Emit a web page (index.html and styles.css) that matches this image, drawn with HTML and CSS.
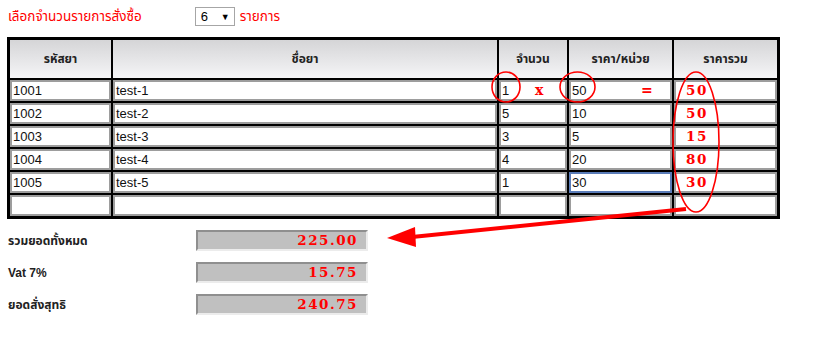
FILE: index.html
```html
<!DOCTYPE html>
<html lang="th">
<head>
<meta charset="utf-8">
<title>สั่งซื้อยา</title>
<link rel="stylesheet" href="styles.css">
</head>
<body>
<div class="page">
  <div class="topbar">
    <span class="red-label">เลือกจำนวนรายการสั่งซื้อ</span>
    <div class="select"><span>6</span><span class="caret">▼</span></div>
    <span class="red-label">รายการ</span>
  </div>

  <table class="grid">
    <colgroup>
      <col class="c1"><col class="c2"><col class="c3"><col class="c4"><col class="c5">
    </colgroup>
    <thead>
      <tr><th>รหัสยา</th><th>ชื่อยา</th><th>จำนวน</th><th>ราคา/หน่วย</th><th>ราคารวม</th></tr>
    </thead>
    <tbody>
      <tr><td><div class="in">1001</div></td><td><div class="in">test-1</div></td><td><div class="in">1</div></td><td><div class="in">50</div></td><td><div class="in sum">50</div></td></tr>
      <tr><td><div class="in">1002</div></td><td><div class="in">test-2</div></td><td><div class="in">5</div></td><td><div class="in">10</div></td><td><div class="in sum">50</div></td></tr>
      <tr><td><div class="in">1003</div></td><td><div class="in">test-3</div></td><td><div class="in">3</div></td><td><div class="in">5</div></td><td><div class="in sum">15</div></td></tr>
      <tr><td><div class="in">1004</div></td><td><div class="in">test-4</div></td><td><div class="in">4</div></td><td><div class="in">20</div></td><td><div class="in sum">80</div></td></tr>
      <tr><td><div class="in">1005</div></td><td><div class="in">test-5</div></td><td><div class="in">1</div></td><td><div class="in focus">30</div></td><td><div class="in sum">30</div></td></tr>
      <tr><td><div class="in"></div></td><td><div class="in"></div></td><td><div class="in"></div></td><td><div class="in"></div></td><td><div class="in sum"></div></td></tr>
    </tbody>
  </table>

  <div class="totals">
    <span class="tlabel">รวมยอดทั้งหมด</span><div class="tbox">225.00</div>
    <span class="tlabel">Vat 7%</span><div class="tbox">15.75</div>
    <span class="tlabel">ยอดสั่งสุทธิ</span><div class="tbox">240.75</div>
  </div>

  <span class="mark mark-x">x</span>
  <span class="mark mark-eq">=</span>

  <svg class="annot" width="821" height="339" viewBox="0 0 821 339">
    <ellipse cx="506" cy="87" rx="14" ry="15" fill="none" stroke="#f00" stroke-width="1.6"/>
    <ellipse cx="577.5" cy="87" rx="17.5" ry="15" fill="none" stroke="#f00" stroke-width="1.6"/>
    <ellipse cx="696" cy="142" rx="23" ry="70" fill="none" stroke="#f00" stroke-width="1.6"/>
    <line x1="686" y1="209" x2="412" y2="237" stroke="#f00" stroke-width="4"/>
    <polygon points="387,238 415,227 416,247" fill="#f00"/>
  </svg>
</div>
</body>
</html>
```

FILE: styles.css
```css
* { box-sizing: border-box; }
html, body { margin: 0; padding: 0; background: #fff; }
body {
  font-family: Tahoma, "Noto Sans Thai", "DejaVu Sans", "Liberation Sans", sans-serif;
  font-size: 13px;
  color: #111;
}
.page {
  position: relative;
  width: 821px;
  height: 339px;
  padding: 7px 0 0 7px;
}
.topbar {
  display: flex;
  align-items: center;
  height: 19px;
  padding-left: 1px;
}
.red-label { color: #f00; font-size: 13.5px; }
.select {
  margin-left: 53px;
  margin-right: 5px;
  width: 40px;
  height: 19px;
  border: 1px solid #a6a6a6;
  display: flex;
  align-items: center;
  justify-content: space-between;
  padding: 0 4px 0 5px;
  font-family: "Liberation Sans", Arial, sans-serif;
  font-size: 13px;
  color: #000;
}
.select .caret { font-size: 9px; }

.grid {
  margin-top: 11px;
  border: 3px solid #000;
  border-spacing: 0;
  width: 773px;
  table-layout: fixed;
}
col.c1 { width: 101px; }
col.c2 { width: 386px; }
col.c3 { width: 70px; }
col.c4 { width: 105px; }
col.c5 { width: 105px; }
.grid th, .grid td {
  padding: 0;
  border-left: 2px solid #000;
  border-top: 2px solid #000;
}
.grid th:first-child, .grid td:first-child { border-left: 0; }
.grid thead th { border-top: 0; }
.grid th {
  height: 38px;
  background: linear-gradient(#d5d5d7, #f5f5f7);
  font-weight: bold;
  font-size: 12px;
  color: #222;
  text-align: center;
}
.grid td { height: 21px; }
.in {
  height: 21px;
  border: 2px solid #9d9d9d;
  background: #fff;
  font-family: "Liberation Sans", Arial, sans-serif;
  font-size: 13px;
  line-height: 17px;
  padding-left: 1px;
  color: #111;
  white-space: nowrap;
}
.in.focus { border-color: #5a7cb8; }
.in.sum {
  color: #f00;
  font-family: "DejaVu Serif", "Liberation Serif", serif;
  font-weight: bold;
  font-size: 13.5px;
  letter-spacing: 1.5px;
  padding-left: 10px;
}

.totals {
  margin-top: 11px;
  display: grid;
  grid-template-columns: 189px 172px;
  row-gap: 11px;
  align-items: center;
}
.tlabel {
  padding-left: 1px;
  font-family: "Liberation Sans", Tahoma, "Noto Sans Thai", sans-serif;
  font-weight: bold;
  font-size: 12px;
  color: #222;
}
.tbox {
  height: 21px;
  background: #c0c0c0;
  border-style: solid;
  border-width: 2px;
  border-color: #8f8f8f #ececec #ececec #8f8f8f;
  text-align: right;
  padding-right: 8px;
  color: #f00;
  font-family: "DejaVu Serif", "Liberation Serif", serif;
  font-weight: bold;
  font-size: 13.5px;
  letter-spacing: 1.5px;
  line-height: 17px;
}

.mark {
  position: absolute;
  color: #f00;
  font-family: "DejaVu Serif", "Liberation Serif", serif;
  font-weight: bold;
  font-size: 14px;
  line-height: 1;
}
.mark-x { left: 535px; top: 83px; }
.mark-eq { left: 641px; top: 83px; }
.annot {
  position: absolute;
  left: 0;
  top: 0;
  pointer-events: none;
}
```
